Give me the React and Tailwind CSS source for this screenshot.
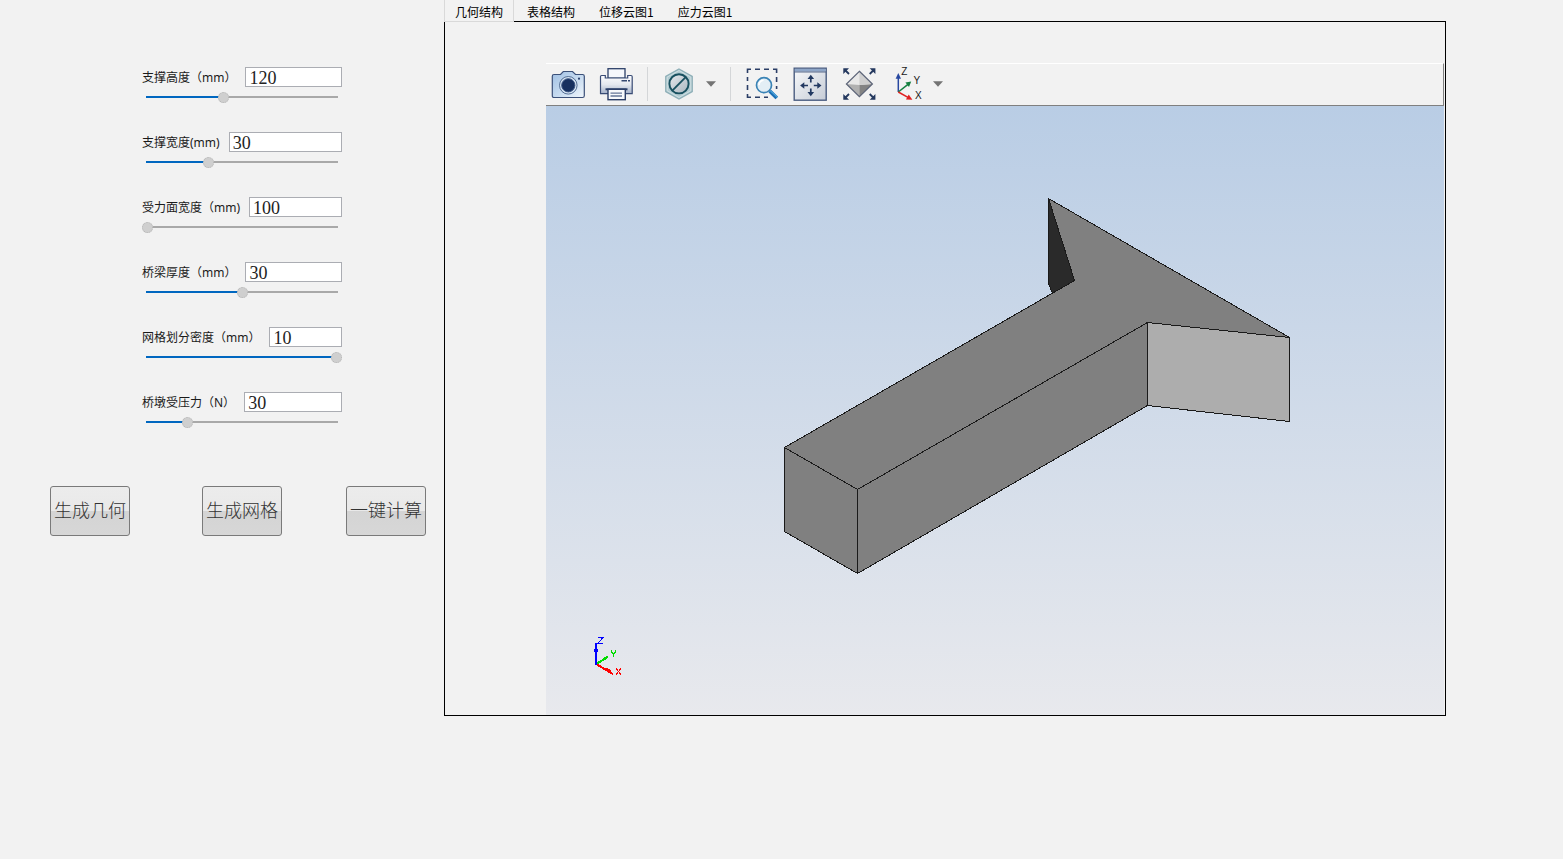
import { useState } from "react";

const PARAMETERS = [
  { id: "support-height", label: "支撑高度（mm）", value: 120, min: 80, max: 180 },
  { id: "support-width", label: "支撑宽度(mm)", value: 30, min: 17, max: 57 },
  { id: "face-width", label: "受力面宽度（mm)", value: 100, min: 100, max: 200 },
  { id: "beam-thickness", label: "桥梁厚度（mm）", value: 30, min: 20, max: 40 },
  { id: "mesh-density", label: "网格划分密度（mm）", value: 10, min: 1, max: 10 },
  { id: "pier-pressure", label: "桥墩受压力（N）", value: 30, min: 9, max: 109 },
];

const TABS = ["几何结构", "表格结构", "位移云图1", "应力云图1"];

function ParameterRow({ id, label, value, min, max }) {
  const [current, setCurrent] = useState(String(value));
  const number = Math.min(max, Math.max(min, Number(current) || min));
  const filled = ((number - min) / (max - min)) * 100;
  return (
    <div className="flex flex-col gap-1">
      <div className="flex h-5 items-center gap-[9px]">
        <label htmlFor={id} className="shrink-0 pt-0.5 text-xs text-[#1a1a1a]">
          {label}
        </label>
        <input
          id={id}
          type="text"
          value={current}
          onChange={(e) => setCurrent(e.target.value)}
          className="h-5 w-0 min-w-0 flex-1 border border-[#abadb3] bg-white px-[3px] pt-0.5 font-['Liberation_Serif',serif] text-lg leading-4 text-[#222] outline-none"
        />
      </div>
      <div className="grid h-3 items-center">
        <div className="col-start-1 row-start-1 mx-1 h-0.5 bg-[#a9a9a9]">
          <div className="h-full bg-[#0067c0]" style={{ width: `${filled}%` }} />
        </div>
        <input
          type="range"
          aria-label={label}
          min={min}
          max={max}
          value={number}
          onChange={(e) => setCurrent(e.target.value)}
          className="z-10 col-start-1 row-start-1 m-0 h-3 w-full appearance-none bg-transparent [&::-webkit-slider-thumb]:h-[11px] [&::-webkit-slider-thumb]:w-[11px] [&::-webkit-slider-thumb]:appearance-none [&::-webkit-slider-thumb]:rounded-full [&::-webkit-slider-thumb]:border [&::-webkit-slider-thumb]:border-dotted [&::-webkit-slider-thumb]:border-[#b4b4b4] [&::-webkit-slider-thumb]:bg-[#cfcfcf]"
        />
      </div>
    </div>
  );
}

function ActionButton({ children, className = "" }) {
  return (
    <button
      type="button"
      className={`h-[50px] w-20 rounded-[3px] border border-[#7a7a7a] bg-[linear-gradient(#ececec_0%,#e9e9e9_50%,#d4d4d4_50%,#d7d7d7_100%)] font-['Liberation_Serif','Noto_Sans_CJK_SC',serif] text-lg font-light whitespace-nowrap text-[#333] ${className}`}
    >
      {children}
    </button>
  );
}

function CameraIcon() {
  return (
    <svg viewBox="0 0 34 34" className="size-[34px]" aria-hidden="true">
      <defs>
        <linearGradient id="camera-body" x1="0" y1="0" x2="1" y2="1">
          <stop offset="0" stopColor="#9fbfe3" />
          <stop offset="0.5" stopColor="#c4d9ef" />
          <stop offset="1" stopColor="#f0f6fc" />
        </linearGradient>
      </defs>
      <path
        d="M3 7.5H9.5L12.3 4.5H21.5L24.5 7.5H31.5Q33.3 7.5 33.3 9.3V28.7Q33.3 30.5 31.5 30.5H3Q1.3 30.5 1.3 28.7V9.3Q1.3 7.5 3 7.5Z"
        fill="url(#camera-body)"
        stroke="#3b5079"
        strokeWidth="1.2"
      />
      <circle cx="17.3" cy="18.3" r="8.8" fill="#d5e3f2" stroke="#456089" strokeWidth="0.9" />
      <circle cx="17.3" cy="18.3" r="6.6" fill="#17305f" stroke="#3c5684" strokeWidth="1" />
      <circle cx="28" cy="11.7" r="1.1" fill="#28406e" />
    </svg>
  );
}

function PrinterIcon() {
  return (
    <svg viewBox="0 0 34 34" className="size-[34px]" aria-hidden="true">
      <defs>
        <linearGradient id="printer-body" x1="0" y1="0" x2="0" y2="1">
          <stop offset="0" stopColor="#fdfdfe" />
          <stop offset="0.5" stopColor="#e4e8ef" />
          <stop offset="1" stopColor="#a3b0c8" />
        </linearGradient>
      </defs>
      <rect x="9" y="1.7" width="17" height="9.5" fill="#f5f8fc" stroke="#2c3f68" strokeWidth="1.3" />
      <path
        d="M1.5 9.5Q1.5 8.5 2.5 8.5H6.3V11H28.7V8.5H32Q33.2 8.5 33.2 9.7V26.6H1.5Z"
        fill="url(#printer-body)"
        stroke="#394c75"
        strokeWidth="1.2"
      />
      <path d="M22.5 13.7H28M29 13.7H31" stroke="#344871" strokeWidth="1.5" />
      <path d="M6.5 22.3H28.5" stroke="#263b68" strokeWidth="2" />
      <rect x="9" y="22.3" width="17.3" height="10.4" fill="#f7f9fc" stroke="#2c3f68" strokeWidth="1.4" />
      <path d="M11.5 26.2H23M11.5 29H23" stroke="#667798" strokeWidth="1.3" />
    </svg>
  );
}

function HexagonIcon() {
  return (
    <svg viewBox="0 0 34 34" className="size-[34px]" aria-hidden="true">
      <defs>
        <linearGradient id="hexagon-disc" x1="0" y1="0" x2="1" y2="1">
          <stop offset="0" stopColor="#e6eaee" />
          <stop offset="1" stopColor="#a9b5be" />
        </linearGradient>
      </defs>
      <path d="M17 2L30.2 9.3V24.5L17 32L3.8 24.5V9.3Z" fill="#b2cbd1" stroke="#8fb0b8" strokeWidth="1.4" />
      <path d="M17 3.6L28.8 10.1V23.7L17 30.4L5.2 23.7V10.1Z" fill="none" stroke="#cfdfe3" strokeWidth="1" />
      <circle cx="17" cy="16.8" r="9.6" fill="url(#hexagon-disc)" stroke="#18505f" strokeWidth="1.9" />
      <path d="M10.3 23.6L23.7 10.1" stroke="#18505f" strokeWidth="1.9" />
    </svg>
  );
}

function ZoomAreaIcon() {
  return (
    <svg viewBox="0 0 34 34" className="size-[34px]" aria-hidden="true">
      <path
        d="M2.5 6V2.3H6M10 2.3H15M19 2.3H24M28 2.3H31.6V6M31.6 10V15M31.6 19V22M2.5 10V14M2.5 18V23M2.5 27V30.3H6M10 30.3H15M19 30.3H23"
        fill="none"
        stroke="#2b3e66"
        strokeWidth="1.6"
      />
      <path d="M24.7 24L31.8 31" stroke="#1b6fb5" strokeWidth="3.8" />
      <path d="M25.5 23.8L32.2 30" stroke="#4ba3da" strokeWidth="1.2" />
      <circle cx="19" cy="18.2" r="7.5" fill="#e3eef5" stroke="#3a83b5" strokeWidth="1.7" />
      <path d="M14 18a5 5 0 0 1 4.5-4.8" fill="none" stroke="#fff" strokeWidth="1.6" />
    </svg>
  );
}

function PanIcon() {
  return (
    <svg viewBox="0 0 34 34" className="size-[34px]" aria-hidden="true">
      <defs>
        <linearGradient id="pan-window" x1="0" y1="0" x2="1" y2="1">
          <stop offset="0" stopColor="#f7f9fb" />
          <stop offset="1" stopColor="#c6ccd6" />
        </linearGradient>
      </defs>
      <rect x="1.2" y="1.2" width="32" height="32" fill="url(#pan-window)" stroke="#4a5c80" strokeWidth="1.4" />
      <rect x="1.8" y="1.8" width="30.8" height="2.8" fill="#8ea6c8" />
      <path d="M1.2 5H33.2" stroke="#4a5c80" strokeWidth="0.9" />
      <path d="M17.8 10V15.5M17.8 21.5V27M9.3 18.5H15M20.8 18.5H26.3" stroke="#223961" strokeWidth="1.7" />
      <path
        d="M17.8 7.8L21.1 12H14.5ZM17.8 29.2L14.5 25H21.1ZM7.1 18.5L11.3 15.2V21.8ZM28.5 18.5L24.3 21.8V15.2Z"
        fill="#223961"
      />
    </svg>
  );
}

function FitIcon() {
  return (
    <svg viewBox="0 0 34 34" className="size-[34px] overflow-visible" aria-hidden="true">
      <path d="M18.4 4.3L31.4 17L18.4 29.7L5.4 17Z" fill="#e8e8e8" />
      <path d="M5.4 17L18.4 18V29.7Z" fill="#b0b0b0" />
      <path d="M31.4 17L18.4 18V29.7Z" fill="#838383" />
      <path d="M18.4 4.3L31.4 17L18.4 18Z" fill="#cfcfcf" />
      <path d="M18.4 4.3L31.4 17L18.4 29.7L5.4 17Z" fill="none" stroke="#5c6478" strokeWidth="1.2" />
      <path d="M3.5 2.5L8 7M33.2 2.5L28.7 7M3.5 31.5L8 27M33.2 31.5L28.7 27" stroke="#25395f" strokeWidth="1.8" />
      <path
        d="M2.3 1.3H8L2.3 7ZM34.4 1.3V7L28.7 1.3ZM2.3 32.7V27L8 32.7ZM34.4 32.7H28.7L34.4 27Z"
        fill="#25395f"
      />
    </svg>
  );
}

function AxesIcon() {
  return (
    <svg viewBox="0 0 34 34" className="size-[34px] overflow-visible" aria-hidden="true">
      <path d="M9.3 25V9" stroke="#2848a0" strokeWidth="1.5" />
      <path d="M9.3 6L12 11.8H6.6Z" fill="#2848a0" />
      <path d="M9.3 25L19 17.3" stroke="#158040" strokeWidth="1.5" />
      <path d="M22.2 14.5L20 20L16.4 15.4Z" fill="#158040" />
      <path d="M9.3 25L19 30.4" stroke="#e02020" strokeWidth="1.5" />
      <path d="M23.4 32.8L17 32.4L19.7 27.5Z" fill="#e02020" />
      <g fill="#1a1a1a" className="font-['Liberation_Sans',sans-serif] text-[10px]">
        <text x="12.3" y="8">Z</text>
        <text x="24.6" y="17">Y</text>
        <text x="26" y="32">X</text>
      </g>
    </svg>
  );
}

function Caret() {
  return (
    <svg viewBox="0 0 10 6" className="h-1.5 w-2.5" aria-hidden="true">
      <path d="M0 0.3H10L5 5.8Z" fill="#747474" />
    </svg>
  );
}

function ToolButton({ label, children }) {
  return (
    <button type="button" aria-label={label} className="shrink-0">
      {children}
    </button>
  );
}

function Toolbar() {
  return (
    <div
      role="toolbar"
      className="flex h-[43px] items-center gap-[14px] border-t border-r border-b border-t-white border-r-[#808080] border-b-[#808080] pb-px pl-[5px]"
    >
      <ToolButton label="截图">
        <CameraIcon />
      </ToolButton>
      <ToolButton label="打印">
        <PrinterIcon />
      </ToolButton>
      <div className="h-[34px] w-px bg-[#d4d6d8]" />
      <div className="flex items-center gap-2.5">
        <ToolButton label="剖切">
          <HexagonIcon />
        </ToolButton>
        <ToolButton label="剖切选项">
          <Caret />
        </ToolButton>
      </div>
      <div className="h-[34px] w-px bg-[#d4d6d8]" />
      <ToolButton label="区域缩放">
        <ZoomAreaIcon />
      </ToolButton>
      <ToolButton label="平移">
        <PanIcon />
      </ToolButton>
      <ToolButton label="适应窗口">
        <FitIcon />
      </ToolButton>
      <div className="flex items-center gap-2.5">
        <ToolButton label="视图方向">
          <AxesIcon />
        </ToolButton>
        <ToolButton label="视图方向选项">
          <Caret />
        </ToolButton>
      </div>
    </div>
  );
}

function ModelView() {
  return (
    <svg
      viewBox="0 0 898 609"
      role="img"
      aria-label="几何结构"
      className="block h-auto w-full bg-linear-to-b from-[#b9cde5] to-[#e8e9ed]"
      shapeRendering="crispEdges"
    >
      <g transform="translate(0.5 0.5)" stroke="#1a1a1a" strokeWidth="1" strokeLinejoin="round">
        <path d="M502 92L528 174L506 187L502 177Z" fill="#2a2a2a" />
        <path d="M502 92L743 231L601 216L311 383L238 341L528 174Z" fill="#808080" />
        <path d="M238 341L311 383V467L238 425Z" fill="#808080" />
        <path d="M311 383L601 216V299L311 467Z" fill="#808080" />
        <path d="M601 216L743 231V315L601 299Z" fill="#adadad" />
      </g>
      <g strokeWidth="2" fill="none">
        <path d="M50 558L62 551" stroke="#00dc00" />
        <path d="M50 558L67 568" stroke="#ff0000" />
        <path d="M50 559V537" stroke="#0000ff" />
      </g>
      <rect x="48" y="543" width="4" height="3" fill="#0000ff" />
      <path d="M57 552L61 550L63 551L58 554Z" fill="#00dc00" />
      <path d="M60 562L64 563L66 567L60 565Z" fill="#ff0000" />
      <g fill="none" strokeWidth="1">
        <path d="M52 531.5H57L52 537.5H57" stroke="#0000ff" />
        <path d="M65.5 544V546L67.5 548L69.5 546V544M67.5 548V551" stroke="#00dc00" />
        <path d="M70 562L75 569M75 562L70 569" stroke="#ff0000" />
      </g>
    </svg>
  );
}

export default function App() {
  const [active, setActive] = useState(0);
  return (
    <div className="flex min-h-screen items-start bg-[#f2f2f2] font-['Noto_Sans','Noto_Sans_CJK_SC',sans-serif]">
      <aside className="flex w-[444px] shrink-0 flex-col gap-[58px] pt-[67px]">
        <form className="ml-[142px] flex w-[200px] flex-col gap-[29px]">
          {PARAMETERS.map((parameter) => (
            <ParameterRow key={parameter.id} {...parameter} />
          ))}
        </form>
        <div className="flex gap-16 pl-[50px]">
          <ActionButton className="mr-2">生成几何</ActionButton>
          <ActionButton>生成网格</ActionButton>
          <ActionButton>一键计算</ActionButton>
        </div>
      </aside>
      <main className="mr-[117px] min-w-0 flex-1">
        <div
          role="tablist"
          className="relative z-10 -mb-px flex h-[22px] gap-0.5 font-['Noto_Sans_CJK_SC',sans-serif] text-xs text-black"
        >
          {TABS.map((tab, index) => (
            <button
              key={tab}
              type="button"
              role="tab"
              aria-selected={index === active}
              onClick={() => setActive(index)}
              className={
                index === active
                  ? "border-x border-b border-[#d9d9d9] bg-[#f2f2f2] px-2.5 pt-0.5"
                  : "border-x border-b border-transparent px-2.5 pt-0.5"
              }
            >
              {tab}
            </button>
          ))}
        </div>
        <section className="border border-black pt-[41px] pr-px pl-[101px]">
          <Toolbar />
          <ModelView />
        </section>
      </main>
    </div>
  );
}
